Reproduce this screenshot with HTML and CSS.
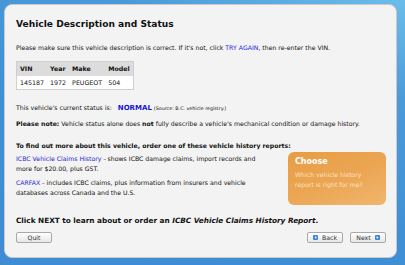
FILE: index.html
```
<!DOCTYPE html>
<html>
<head>
<meta charset="utf-8">
<link rel="stylesheet" href="styles.css">
</head>
<body>
<div class="panel">
  <h1 class="title">Vehicle Description and Status</h1>
  <p class="intro">Please make sure this vehicle description is correct. If it's not, click <a class="link">TRY AGAIN</a>, then re-enter the VIN.</p>
  <table class="vtable">
    <tr class="head"><th>VIN</th><th>Year</th><th>Make</th><th>Model</th></tr>
    <tr><td>145187</td><td>1972</td><td>PEUGEOT</td><td>504</td></tr>
  </table>
  <p class="status">This vehicle's current status is: <span class="normal">NORMAL</span> <span class="source">(Source: B.C. vehicle registry.)</span></p>
  <p class="note"><b>Please note:</b> Vehicle status alone does <b>not</b> fully describe a vehicle's mechanical condition or damage history.</p>
  <p class="find">To find out more about this vehicle, order one of these vehicle history reports:</p>
  <div class="reports">
    <div class="reportlist">
      <p class="rep"><a class="link">ICBC Vehicle Claims History</a> - shows ICBC damage claims, import records and more for $20.00, plus GST.</p>
      <p class="rep"><a class="link">CARFAX</a> - includes ICBC claims, plus information from insurers and vehicle databases across Canada and the U.S.</p>
    </div>
    <div class="choose">
      <div class="choose-title">Choose</div>
      <div class="choose-text">Which vehicle history report is right for me?</div>
    </div>
  </div>
  <p class="next-text">Click NEXT to learn about or order an <i>ICBC Vehicle Claims History Report</i>.</p>
  <div class="buttons">
    <button class="btn quit">Quit</button>
    <div class="nav">
      <button class="btn"><span class="ico"><svg width="5" height="5" viewBox="0 0 5 5"><path d="M3.3 1 L1.5 2.5 L3.3 4 Z" fill="#fff"/></svg></span>Back</button>
      <button class="btn">Next<span class="ico"><svg width="5" height="5" viewBox="0 0 5 5"><path d="M1.7 1 L3.5 2.5 L1.7 4 Z" fill="#fff"/></svg></span></button>
    </div>
  </div>
</div>
</body>
</html>
```
FILE: styles.css
```
html, body { margin: 0; padding: 0; }
body {
  width: 405px; height: 265px; overflow: hidden;
  background: linear-gradient(200deg, #6bbde9 0%, #4a9ada 25%, #3f8fd6 60%, #3e8dd4 100%);
  font-family: "DejaVu Sans", Verdana, sans-serif;
  color: #111;
  padding: 4px 8px 0 4px;
  box-sizing: border-box;
}
.panel {
  background: #f3f3f3;
  border: 1px solid #c9c9c9;
  border-radius: 8px;
  height: 254px;
  box-sizing: border-box;
  padding: 13px 10px 0 11px;
}
.title { font-size: 9.1px; font-weight: bold; margin: 0 0 13px 0; line-height: 12px; }
p { margin: 0; font-size: 6.2px; line-height: 10px; }
.link { color: #2626d0; }
.intro { margin-bottom: 8px; }
.vtable { border-collapse: collapse; border: 1px solid #cfcfcf; font-size: 6.3px; background: #fff; margin-bottom: 13px; }
.vtable th { background: #dcdcdc; text-align: left; font-weight: bold; padding: 2px 3px 3px 3px; height: 9px; }
.vtable td { padding: 2px 3px 3px 3px; height: 8px; }
.normal { color: #1414d8; font-weight: bold; margin-left: 4px; font-size: 7px; }
.source { font-size: 4.8px; }
.status { margin-bottom: 5px; }
.note { margin-bottom: 12px; }
.find { font-weight: bold; margin-bottom: 3px; }
.reports { display: flex; justify-content: space-between; align-items: flex-start; }
.reportlist { width: 256px; }
.rep { margin-bottom: 4px; }
.choose {
  width: 98px; height: 53px; margin-top: -2px;
  border-radius: 6px; box-sizing: border-box;
  background: linear-gradient(160deg, #e89d44 0%, #eba552 50%, #f0b66d 100%);
  padding: 4px 7px;
  color: #fff;
}
.choose-title { font-weight: bold; font-size: 8px; line-height: 11px; }
.choose-text { font-size: 6.2px; line-height: 10px; color: #fbe1c0; margin-top: 3px; }
.next-text { font-weight: bold; font-size: 7.3px; margin-top: 10px; line-height: 12px; }
.buttons { display: flex; justify-content: space-between; margin-top: 5px; }
.nav { display: flex; gap: 7px; }
.btn {
  font-family: "DejaVu Sans", Verdana, sans-serif;
  font-size: 6.2px; color: #333;
  height: 11px; padding: 0; margin: 0;
  border: 1px solid #a9a9a9; border-radius: 2px;
  background: linear-gradient(#ffffff, #e6e6e6);
  display: flex; align-items: center; justify-content: center; gap: 4px;
  width: 36px; box-sizing: border-box;
}
.quit { width: 36px; }
.ico { width: 5px; height: 5px; background: #3b86d6; border-radius: 1px; display: inline-flex; }
```
